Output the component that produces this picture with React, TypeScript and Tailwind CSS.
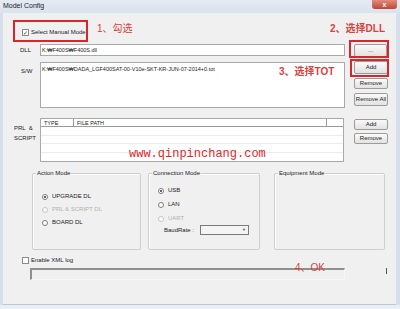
import React from 'react';

const ui = { fontFamily: '"Liberation Sans", Arial, sans-serif' };
const cjk = { fontFamily: '"Liberation Sans", "Noto Sans CJK SC", sans-serif' };

const Btn = ({ label, className = '' }: { label: string; className?: string }) => (
  <div
    className={`flex items-center justify-center rounded-[2px] border border-[#9c9c9c] bg-gradient-to-b from-[#fafafa] to-[#e2e2e2] text-[6px] text-[#222] ${className}`}
  >
    {label}
  </div>
);

const Radio = ({ label, checked = false, disabled = false }: { label: string; checked?: boolean; disabled?: boolean }) => (
  <div className="flex h-[7px] items-center gap-[4px]">
    <span
      className={`flex h-[6px] w-[6px] items-center justify-center rounded-full border bg-white ${
        disabled ? 'border-[#c4c4c4]' : 'border-[#7d7d7d]'
      }`}
    >
      {checked && <span className="h-[2px] w-[2px] rounded-full bg-[#333]" />}
    </span>
    <span className={`text-[6px] ${disabled ? 'text-[#b0b0b0]' : 'text-[#222]'}`}>{label}</span>
  </div>
);

const Group = ({ title, className = '', children }: { title: string; className?: string; children?: React.ReactNode }) => (
  <div className={`relative rounded-[2px] border border-[#cfcfcf] shadow-[inset_1px_1px_0_#fff] ${className}`}>
    <span className="absolute left-[3px] top-[-5px] bg-[#f0f0f0] px-[1px] text-[6px] leading-[8px] text-[#222]">{title}</span>
    {children}
  </div>
);

const Check = ({ checked = false }: { checked?: boolean }) => (
  <span className="flex h-[7px] w-[7px] items-center justify-center border border-[#8a8a8a] bg-white text-[6px] leading-none text-[#333]">
    {checked ? '✓' : ''}
  </span>
);

export default function App() {
  return (
    <div className="relative h-[309px] w-[400px] overflow-hidden bg-[#e9eef5]" style={ui}>
      {/* title bar */}
      <div className="flex h-[13px] items-center bg-gradient-to-b from-[#e4ebf3] to-[#d9e3ee] pl-[3px]">
        <span className="text-[7px] text-[#1b1b1b]">Model Config</span>
      </div>
      <div className="absolute right-[3px] top-0 flex h-[9px] w-[25px] items-center justify-center rounded-b-[3px] bg-gradient-to-b from-[#e08a7c] to-[#c5432f] text-[7px] font-bold leading-none text-white">
        x
      </div>

      {/* window frame + body */}
      <div className="flex h-[292px] bg-[#d5e0ec] pl-[3px] pr-[4px]">
        <div className="flex flex-1 flex-col border-b border-[#b9c9da] bg-[#f0f0f0] text-[#222]">
          {/* manual mode */}
          <div className="mt-[16px] flex h-[7px] items-center gap-[2px] pl-[19px]">
            <Check checked />
            <span className="text-[6px]">Select Manual Mode</span>
          </div>

          {/* DLL */}
          <div className="mt-[7px] flex h-[14px] items-center pl-[17px]">
            <span className="w-[20px] text-[6px]">DLL</span>
            <div className="flex h-[12px] w-[305px] items-center border border-[#a9a9a9] bg-white pl-[1px] text-[5.5px]">
              K:₩F400S₩F400S.dll
            </div>
            <Btn label="..." className="ml-[9px] h-[13px] w-[33px]" />
          </div>

          {/* S/W */}
          <div className="mt-[4px] flex h-[47px] pl-[18px]">
            <span className="w-[19px] pt-[6px] text-[6px]">S/W</span>
            <div className="mt-[1px] h-[46px] w-[305px] border border-[#a9a9a9] bg-white pl-[1px] pt-[3px] text-[5.5px] leading-[6px]">
              K:₩F400S₩DADA_LGF400SAT-00-V10e-SKT-KR-JUN-07-2014+0.tot
            </div>
            <div className="ml-[9px] flex flex-col">
              <Btn label="Add" className="h-[13px] w-[34px]" />
              <Btn label="Remove" className="mt-[4px] h-[11px] w-[34px]" />
              <Btn label="Remove All" className="mt-[4px] h-[13px] w-[34px]" />
            </div>
          </div>

          {/* PRL & SCRIPT */}
          <div className="mt-[10px] flex h-[45px] pl-[11px]">
            <div className="w-[26px] pt-[5px] text-[6px] leading-[10px]">
              <div>PRL &nbsp;&amp;</div>
              <div>SCRIPT</div>
            </div>
            <div className="flex h-[44px] w-[304px] flex-col border border-[#a9a9a9] bg-white text-[5.5px]">
              <div className="flex h-[8px] border-b border-[#9a9a9a]">
                <span className="w-[33px] border-r border-[#9a9a9a] pl-[3px] leading-[8px]">TYPE</span>
                <span className="flex-1 border-r border-[#9a9a9a] pl-[3px] leading-[8px]">FILE PATH</span>
                <span className="w-[16px]" />
              </div>
              <div className="h-[9px] border-b border-[#ececec]" />
              <div className="h-[8px] border-b border-[#ececec]" />
              <div className="h-[9px] border-b border-[#ececec]" />
            </div>
            <div className="ml-[10px] flex flex-col pt-[1px]">
              <Btn label="Add" className="h-[11px] w-[34px]" />
              <Btn label="Remove" className="mt-[3px] h-[11px] w-[34px]" />
            </div>
          </div>

          {/* mode groups */}
          <div className="mt-[10px] flex h-[77px] pl-[29px]">
            <Group title="Action Mode" className="h-[77px] w-[109px]">
              <div className="flex flex-col gap-[6px] pl-[9px] pt-[19px]">
                <Radio label="UPGRADE DL" checked />
                <Radio label="PRL & SCRIPT DL" disabled />
                <Radio label="BOARD DL" />
              </div>
            </Group>
            <Group title="Connection Mode" className="ml-[7px] h-[77px] w-[112px]">
              <div className="flex flex-col gap-[7px] pl-[9px] pt-[13px]">
                <Radio label="USB" checked />
                <Radio label="LAN" />
                <Radio label="UART" disabled />
              </div>
              <div className="mt-[3px] flex items-center pl-[15px]">
                <span className="w-[36px] text-[6px]">BaudRate :</span>
                <div className="flex h-[10px] w-[49px] items-center justify-end border border-[#7a7a7a] bg-[#f4f4f4] pr-[2px] text-[4px] text-[#555]">
                  ▼
                </div>
              </div>
            </Group>
            <Group title="Equipment Mode" className="ml-[14px] h-[77px] w-[111px]" />
          </div>

          {/* xml log */}
          <div className="mt-[7px] flex h-[7px] items-center gap-[2px] pl-[19px]">
            <Check />
            <span className="text-[6px]">Enable XML log</span>
          </div>

          {/* progress */}
          <div className="mt-[4px] flex h-[12px] items-start pl-[27px]">
            <div className="h-[12px] w-[315px] border-l-2 border-t-2 border-[#8f8f8f] border-b border-b-[#f7f7f7] border-r border-r-[#f7f7f7]" />
            <div className="ml-[41px] h-[6px] w-px bg-[#555]" />
          </div>
        </div>
      </div>

      {/* annotations */}
      <div className="absolute left-[13px] top-[20px] h-[22px] w-[75px] border-2 border-[#d8262c]" />
      <div className="absolute left-[349px] top-[40px] h-[18px] w-[40px] border-2 border-[#d8262c]" />
      <div className="absolute left-[350px] top-[59px] h-[18px] w-[39px] border-2 border-[#d8262c]" />
      <span className="absolute left-[97px] top-[23px] text-[10px] leading-[12px] text-[#d9413c]" style={cjk}>
        1、勾选
      </span>
      <span className="absolute left-[330px] top-[23px] text-[10px] font-bold leading-[12px] text-[#d9413c]" style={cjk}>
        2、选择DLL
      </span>
      <span className="absolute left-[279px] top-[66px] text-[10px] font-bold leading-[12px] text-[#d9413c]" style={cjk}>
        3、选择TOT
      </span>
      <span className="absolute left-[295px] top-[262px] text-[10px] leading-[12px] text-[#d9413c]" style={cjk}>
        4、OK
      </span>
      <span
        className="absolute left-[129px] top-[147px] text-[12px] leading-[14px] text-[#e3262b]"
        style={{ fontFamily: '"Liberation Mono", monospace' }}
      >
        www.qinpinchang.com
      </span>
    </div>
  );
}
